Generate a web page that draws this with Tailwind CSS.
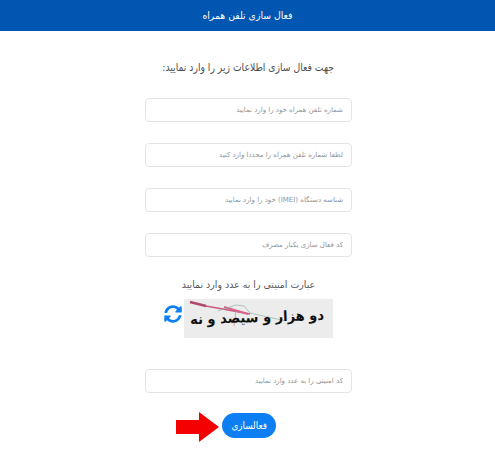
<!DOCTYPE html>
<html lang="fa" dir="rtl">
<head>
  <meta charset="UTF-8">
  <title>فعال سازی تلفن همراه</title>
  <script src="https://cdn.jsdelivr.net/npm/@tailwindcss/browser@4"></script>
</head>
<body class="bg-white font-['DejaVu_Sans',sans-serif] h-[451px] overflow-hidden">

  <header class="h-[31px] bg-[#0056b0] flex items-center justify-center text-white text-[10px]">
    <span class="scale-x-[0.93]">فعال سازی تلفن همراه</span>
  </header>

  <main class="flex flex-col items-center pl-[2px]">
    <h1 class="mt-[29px] h-[16px] leading-[16px] text-[11px] font-normal text-[#4a4f54] scale-x-[0.84]">جهت فعال سازی اطلاعات زیر را وارد نمایید:</h1>

    <form class="w-[207px] flex flex-col">
      <input class="mt-[22px] h-[24px] w-full rounded border border-[#e2e5e8] px-2 text-[7px] placeholder:text-[#8f9499]" placeholder="شماره تلفن همراه خود را وارد نمایید">
      <input class="mt-[21px] h-[24px] w-full rounded border border-[#e2e5e8] px-2 text-[7px] placeholder:text-[#8f9499]" placeholder="لطفا شماره تلفن همراه را مجددا وارد کنید">
      <input class="mt-[21px] h-[24px] w-full rounded border border-[#e2e5e8] px-2 text-[7px] placeholder:text-[#8f9499]" placeholder="شناسه دستگاه (IMEI) خود را وارد نمایید">
      <input class="mt-[21px] h-[24px] w-full rounded border border-[#e2e5e8] px-2 text-[7px] placeholder:text-[#8f9499]" placeholder="کد فعال سازی یکبار مصرف">

      <p class="mt-[21px] h-[14px] leading-[14px] text-center text-[10px] text-[#55595e] scale-x-[0.94]">عبارت امنیتی را به عدد وارد نمایید</p>

      <div dir="ltr" class="mt-[7px] flex items-center justify-start gap-[2px] pl-[19px]">
        <svg class="w-[18px] h-[18px] mb-[10px]" viewBox="0 0 512 512" fill="#0d7ff2"><path d="M370.72 133.28C339.458 104.008 298.888 87.962 255.848 88c-77.458.068-144.328 53.178-162.791 126.85-1.344 5.363-6.122 9.15-11.651 9.15H24.103c-7.498 0-13.194-6.807-11.807-14.176C33.933 94.924 134.813 8 256 8c66.448 0 126.791 26.136 171.315 68.685L463.03 40.97C478.149 25.851 504 36.559 504 57.941V192c0 13.255-10.745 24-24 24H345.941c-21.382 0-32.09-25.851-16.971-40.971l41.75-41.749zM32 296h134.059c21.382 0 32.09 25.851 16.971 40.971l-41.75 41.75c31.262 29.273 71.835 45.319 114.876 45.28 77.418-.07 144.315-53.144 162.787-126.849 1.344-5.363 6.122-9.15 11.651-9.15h57.304c7.498 0 13.194 6.807 11.807 14.176C478.067 417.076 377.187 504 256 504c-66.448 0-126.791-26.136-171.315-68.685L48.97 471.03C33.851 486.149 8 475.441 8 454.059V320c0-13.255 10.745-24 24-24z"/></svg>
        <div class="relative w-[149px] h-[39px] bg-[#ececec] overflow-hidden flex items-center justify-center">
          <svg class="absolute inset-0 w-full h-full" viewBox="0 0 149 39" fill="none">
            <path d="M6 3 L22 7 L66 15" stroke="#c9577f" stroke-width="1.4"/>
            <path d="M6 3 L22 7" stroke="#b04a70" stroke-width="2.4"/>
            <path d="M40 8 L64 15" stroke="#d9648a" stroke-width="2.2"/>
            <path d="M52 12 L50 27" stroke="#e58aa5" stroke-width="0.8"/>
            <path d="M34 12 L52 6 L60 7 L66 14 L102 22" stroke="#8fb3a8" stroke-width="0.7"/>
          </svg>
          <span dir="rtl" class="relative font-bold text-[14px] leading-none text-[#111] whitespace-nowrap rotate-[-2deg] scale-x-[0.93] -mt-[3px] ml-[-2px]">دو هزار و سیصد و نه</span>
        </div>
      </div>

      <input class="mt-[31px] h-[24px] w-full rounded border border-[#e2e5e8] px-2 text-[7px] placeholder:text-[#8f9499]" placeholder="کد امنیتی را به عدد وارد نمایید">

      <div dir="ltr" class="mt-[19px] flex items-start pl-[31px] gap-[3px]">
        <svg class="w-[43px] h-[30px]" viewBox="0 0 43 30" fill="#f40000"><path d="M0 8 H23 V0 L43 15 L23 30 V22 H0 Z"/></svg>
        <button type="button" class="mt-[1px] w-[54px] h-[25px] rounded-full bg-[#0d7ff2] text-white text-[10px]"><span class="inline-block scale-x-[0.88]">فعالسازی</span></button>
      </div>
    </form>
  </main>

</body>
</html>
